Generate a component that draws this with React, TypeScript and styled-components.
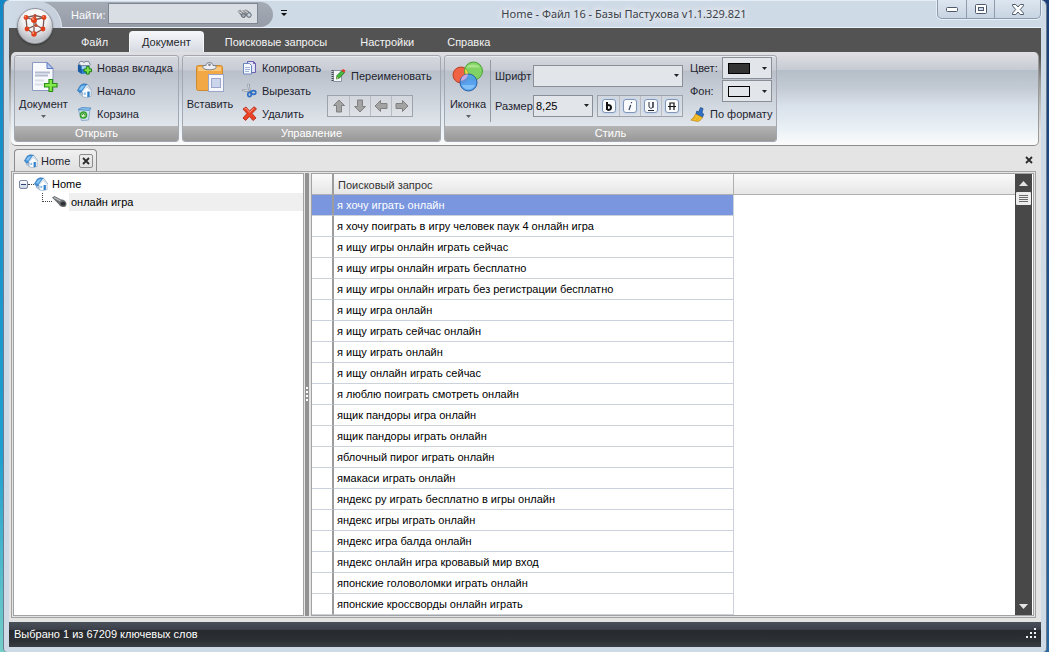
import React from "react";
import styled, { createGlobalStyle, css } from "styled-components";

const FONT = `"Liberation Sans", Arial, sans-serif`;
const CAPTION_FONT = `"Noto Sans", "Open Sans", sans-serif`;

const Global = createGlobalStyle`
  *, *::before, *::after { box-sizing: border-box; }
  html, body { margin: 0; height: 100%; overflow: hidden; }
  #root { height: 100%; }
  body, button, input, select, table { font-family: ${FONT}; font-size: 11px; line-height: 14px; color: #1e2430; }
  button { margin: 0; padding: 0; border: 0; background: none; white-space: nowrap; cursor: default; }
  svg { display: block; flex: none; }
`;

/* ---------- window frame ---------- */

const Desktop = styled.div`
  height: 100vh;
  padding: 0 2px 0 3px;
  display: flex;
  background:
    linear-gradient(#1388c6, #1f9fd0 70%, #74cfc8) left / 50% 100% no-repeat,
    linear-gradient(#1b3f76, #2a66a0) right / 50% 100% no-repeat;
`;

const Frame = styled.div`
  flex: 1;
  min-width: 0;
  display: flex;
  flex-direction: column;
  padding: 0 5px 5px;
  border: solid #6b7c90;
  border-width: 0 1px;
  border-radius: 6px 6px 4px 4px;
  background: #cfdae7;
`;

const TitleBar = styled.header`
  position: relative;
  display: flex;
  height: 28px;
  border-bottom: 1px solid #e9f1f9;
  box-shadow: inset 0 1px 0 #e6eef7;
`;

const Halo = styled.div`
  width: 53px;
  height: 27px;
  margin-top: 1px;
  border-radius: 0 26px 0 0;
  border-right: 1px solid #e3e9f1;
  background: linear-gradient(90deg, #cfdae7, #c6cfdb);
  z-index: 1;
`;

const OrbButton = styled.button`
  position: absolute;
  left: 8px;
  top: 8px;
  z-index: 2;
  width: 36px;
  height: 36px;
  display: grid;
  place-items: center;
  border-radius: 50%;
  border: 1px solid #8f949c;
  background: radial-gradient(circle at 50% 25%, #ffffff 0, #f2f2f4 40%, #b9bcc2 75%, #dadbe0 100%);
  box-shadow: 0 1px 2px #00000066;
`;

const FindBar = styled.div`
  display: flex;
  align-items: center;
  justify-content: space-between;
  width: 237px;
  height: 25px;
  margin: 2px 0 0 -26px;
  padding: 0 15px 2px 35px;
  border-radius: 0 13px 13px 0;
  background: linear-gradient(#a5abb5, #979da8);
`;

const FindLabel = styled.label`
  padding-top: 2px;
  color: #fbfcfd;
`;

const FindBox = styled.span`
  display: flex;
  align-items: center;
  width: 150px;
  height: 21px;
  padding-right: 5px;
  border: 1px solid #7f8590;
  background: #d9dde4;
`;

const FindInput = styled.input`
  flex: 1;
  min-width: 0;
  height: 19px;
  border: 0;
  outline: 0;
  background: none;
`;

const QuickMenu = styled.button`
  width: 22px;
  height: 27px;
  display: grid;
  place-items: center;
`;

const Title = styled.h1`
  flex: 1;
  margin: 0;
  padding: 6px 0 0 16px;
  text-align: center;
  font-family: ${CAPTION_FONT};
  font-size: 11px;
  line-height: 16px;
  font-weight: 400;
  color: #3c4148;
  white-space: nowrap;
  text-shadow: 0 0 6px #ffffff, 0 0 8px #ffffff;
`;

const Controls = styled.div`
  display: flex;
  height: 19px;
  border: 1px solid #8d9bad;
  border-top: 0;
  border-radius: 0 0 5px 5px;
  background: linear-gradient(#dde6f0, #c8d4e2);
  box-shadow: 0 0 0 1px #e6eef7;
`;

const Control = styled.button<{ $wide?: boolean }>`
  width: ${(p) => (p.$wide ? 46 : 28)}px;
  display: grid;
  place-items: center;
  & + & { border-left: 1px solid #8d9bad; }
`;

/* ---------- ribbon ---------- */

const TabBar = styled.nav`
  display: flex;
  align-items: flex-end;
  gap: 9px;
  height: 24px;
  padding-left: 60px;
  background: #535353;
`;

const Tab = styled.button<{ $active?: boolean }>`
  height: 21px;
  padding: 0 12px;
  color: #f4f4f4;
  ${(p) =>
    p.$active &&
    css`
      color: #26292f;
      border: 1px solid #f4f5f7;
      border-bottom: 0;
      border-radius: 4px 4px 0 0;
      background: linear-gradient(#f4f6f9, #d6dae1);
    `}
`;

const RibbonBack = styled.div`
  background: linear-gradient(#535353 4px, #9a9a9a 30px, #e4e4e4 80px);
`;

const Ribbon = styled.div`
  display: flex;
  gap: 3px;
  height: 94px;
  margin: 0 2px;
  padding: 3px 3px 4px;
  border-bottom: 1px solid #8c8c8c;
  border-right: 1px solid #9a9a9a;
  border-radius: 5px;
  background: linear-gradient(#e0e0e4, #c6cad2 18px, #b4bec8 18px, #c3cad3 36px, #d9e1ea 54px, #e9f0f5 76px, #fbfbfb);
`;

const Group = styled.section`
  display: flex;
  flex-direction: column;
  height: 87px;
  border: 1px solid #a4a7b0;
  border-radius: 3px;
  overflow: hidden;
  background: linear-gradient(#d6d8df, #c9ccd4 14px, #b9c0ca 15px, #c3cad3 30px, #e1e6ec 70px);
  box-shadow: inset 0 1px 0 #e9ebef;
`;

const GroupBody = styled.div`
  flex: 1;
  display: flex;
  padding: 0 4px;
`;

const GroupLabel = styled.h2`
  margin: 0;
  height: 15px;
  font-size: 11px;
  line-height: 15px;
  font-weight: 400;
  text-align: center;
  color: #ffffff;
  background: linear-gradient(#b4b4b4, #989898);
`;

const BigButton = styled.button<{ $width: number }>`
  width: ${(p) => p.$width}px;
  display: flex;
  flex-direction: column;
  align-items: center;
  gap: 4px;
  padding-top: 5px;
`;

const ToolColumn = styled.div<{ $width: number; $near?: boolean }>`
  display: flex;
  flex-direction: column;
  align-items: flex-start;
  width: ${(p) => p.$width}px;
  margin-left: ${(p) => (p.$near ? 4 : 9)}px;
`;

const ToolButton = styled.button<{ $tall?: boolean }>`
  display: flex;
  align-items: center;
  gap: 5px;
  height: ${(p) => (p.$tall ? 39 : 23)}px;
  padding-left: ${(p) => (p.$tall ? 4 : 0)}px;
`;

const ButtonStrip = styled.div`
  display: flex;
  height: 22px;
  border: 1px solid #9da3ad;
  background: linear-gradient(#d3d7dd, #dfe3e8);
`;

const StripButton = styled.button`
  flex: 0 0 21px;
  display: grid;
  place-items: center;
  & + & { border-left: 1px solid #b6bbc4; }
`;

const Divider = styled.div`
  width: 1px;
  height: 62px;
  margin: 4px 4px 0 3px;
  background: #9299a5;
`;

const FormRows = styled.div`
  display: grid;
  grid-template-columns: 38px 150px;
  grid-template-rows: 22px 22px;
  row-gap: 8px;
  align-content: start;
  align-items: center;
  padding-top: 9px;
`;

const SizeRow = styled.div`
  display: flex;
  justify-content: space-between;
`;

const ComboBox = styled.span<{ $width: number }>`
  position: relative;
  display: block;
  width: ${(p) => p.$width}px;
  height: 22px;
  & > svg {
    position: absolute;
    right: 4px;
    top: 9px;
    pointer-events: none;
  }
`;

const Select = styled.select`
  width: 100%;
  height: 100%;
  padding: 0 2px;
  border: 1px solid #8a8e97;
  border-radius: 0;
  appearance: none;
  background: #e2e5ea;
  color: #000000;
`;

const FormatKey = styled.span`
  display: grid;
  place-items: center;
  width: 14px;
  height: 14px;
  border: 1px solid #8296b4;
  border-radius: 3px;
  background: #f8fafc;
  box-shadow: 0 0 2px 1px #c3d6ee;
`;

const ColorGrid = styled.div`
  display: grid;
  grid-template-columns: 32px 50px;
  grid-auto-rows: 22px;
  row-gap: 1px;
  align-content: start;
  align-items: center;
  margin-left: 7px;
  padding-top: 1px;
`;

const WideCell = styled.div`
  grid-column: 1 / -1;
`;

const ColorButton = styled.button`
  display: flex;
  align-items: center;
  justify-content: space-between;
  height: 22px;
  padding: 0 4px 0 5px;
  border: 1px solid #8a8e97;
  background: #e2e5ea;
`;

const Swatch = styled.span<{ $color: string }>`
  width: 22px;
  height: 11px;
  border: 1px solid #000000;
  background: ${(p) => p.$color};
`;

/* ---------- workspace ---------- */

const Body = styled.main`
  flex: 1;
  min-height: 0;
  display: flex;
  flex-direction: column;
  padding: 0 5px 4px 2px;
  background: #e4e4e4;
`;

const DocStrip = styled.div`
  display: flex;
  align-items: center;
  justify-content: space-between;
  height: 25px;
  padding: 3px 1px 0 3px;
`;

const DocTab = styled.div`
  display: flex;
  align-items: center;
  justify-content: space-between;
  width: 83px;
  height: 22px;
  padding: 0 3px 0 9px;
  border: 1px solid #8b8b8b;
  border-bottom: 0;
  border-radius: 4px 4px 0 0;
  background: linear-gradient(#f0f0f0, #e0e0e0);
`;

const DocName = styled.button`
  display: flex;
  align-items: center;
  gap: 3px;
`;

const TabClose = styled.button`
  width: 14px;
  height: 14px;
  display: grid;
  place-items: center;
  border: 1px solid #8b8b8b;
  border-radius: 2px;
`;

const StripClose = styled.button`
  width: 12px;
  height: 14px;
  display: grid;
  place-items: center;
`;

const Workspace = styled.div`
  flex: 1;
  min-height: 0;
  display: flex;
  padding: 1px;
  border: 1px solid #a2a2a2;
`;

const TreePanel = styled.div`
  width: 291px;
  padding: 1px 0;
  border: 1px solid #a2a2a2;
  background: #ffffff;
`;

const TreeRow = styled.div<{ $indent: number }>`
  display: flex;
  align-items: center;
  height: 18px;
  padding-left: ${(p) => p.$indent}px;
  color: #000000;
`;

const Expander = styled.button`
  width: 9px;
  height: 9px;
  display: grid;
  place-items: center;
  border: 1px solid #7b87a6;
  border-radius: 2px;
  background: linear-gradient(#ffffff, #ccd3e4);
`;

const Dots = styled.span<{ $elbow?: boolean }>`
  width: ${(p) => (p.$elbow ? 10 : 6)}px;
  height: ${(p) => (p.$elbow ? 9 : 1)}px;
  align-self: ${(p) => (p.$elbow ? "flex-start" : "center")};
  border-bottom: 1px dotted #444444;
  border-left: ${(p) => (p.$elbow ? "1px dotted #444444" : "0")};
`;

const TreeLabel = styled.span<{ $fill?: boolean }>`
  flex: 1;
  height: 18px;
  line-height: 18px;
  margin-left: 2px;
  padding-left: 2px;
  background: ${(p) => (p.$fill ? "#efefef" : "none")};
`;

const Splitter = styled.div`
  width: 7px;
  display: grid;
  place-items: center;
  border: solid #e4e4e4;
  border-width: 0 2px 0 1px;
  background: #929292;
`;

const GridPanel = styled.div`
  flex: 1;
  min-width: 0;
  display: flex;
  padding: 0 1px 0 0;
  border: 1px solid #a2a2a2;
  background: #ffffff;
`;

const GridScroll = styled.div`
  flex: 1;
  min-width: 0;
  overflow: hidden;
`;

const Table = styled.table`
  width: 100%;
  table-layout: fixed;
  border-spacing: 0;
`;

const Col = styled.col<{ $width?: number }>`
  width: ${(p) => (p.$width ? `${p.$width}px` : "auto")};
`;

const HeadCell = styled.th<{ $marker?: boolean }>`
  height: 21px;
  padding: 2px 4px 0;
  text-align: left;
  font-weight: 400;
  color: #333333;
  border-bottom: 1px solid #b0b0b0;
  border-right: ${(p) => (p.$marker ? "2px solid #9d9d9d" : "1px solid #b0b0b0")};
  background: linear-gradient(#fafafa, #e6e6e6);
  &:last-child { border-right: 0; }
`;

const Row = styled.tr<{ $selected?: boolean }>`
  background: ${(p) => (p.$selected ? "#7a96df" : "#ffffff")};
  color: ${(p) => (p.$selected ? "#ffffff" : "#000000")};
`;

const Cell = styled.td<{ $marker?: boolean }>`
  height: 21px;
  padding: 0 3px;
  white-space: nowrap;
  border-bottom: 1px solid #cbd2dc;
  border-right: ${(p) => (p.$marker ? "2px solid #9d9d9d" : "1px solid #cbd2dc")};
`;

const BlankCell = styled.td`
  background: #ffffff;
`;

const ScrollTrack = styled.div`
  width: 17px;
  display: flex;
  flex-direction: column;
  align-items: center;
  padding: 1px;
  background: #484848;
`;

const ScrollArrow = styled.button`
  width: 15px;
  height: 16px;
  display: grid;
  place-items: center;
`;

const ScrollThumb = styled.div`
  width: 15px;
  height: 13px;
  display: grid;
  place-items: center;
  margin-top: 1px;
  margin-bottom: auto;
  border-radius: 1px;
  background: #ececec;
`;

const StatusBar = styled.footer`
  display: flex;
  align-items: center;
  justify-content: space-between;
  height: 25px;
  padding: 0 4px 2px 5px;
  color: #ffffff;
  background: linear-gradient(#4a505a, #3a3f49 8px, #26292d 8px, #2c2f33 18px, #3a3e44);
`;

/* ---------- drawings ---------- */

const DropArrow = ({ color = "#222222" }: { color?: string }) => (
  <svg width="5" height="3" viewBox="0 0 5 3" aria-hidden="true">
    <path d="M0 0h5L2.500 3z" fill={color} />
  </svg>
);

const OrbIcon = () => (
  <svg width="26" height="26" viewBox="0 0 26 26" aria-hidden="true">
    <g stroke="#7c5a54" strokeWidth="1.300" fill="none">
      <path d="M4 4.500L13 2.500 22 4.500 21 16 12 21 5 16zM4 4.500L12 7 22 4.500M12 7V21M13 2.500L14 12 5 16M14 12L21 16" />
    </g>
    <g fill="#e0401c">
      <circle cx="4" cy="4.500" r="2.400" />
      <circle cx="22" cy="4.500" r="2.400" />
      <circle cx="12" cy="7" r="3" />
      <circle cx="13" cy="2.500" r="1.600" fill="#b84a30" />
      <circle cx="14" cy="12.500" r="1.600" fill="#c84a2c" />
      <circle cx="5" cy="16" r="2.400" />
      <circle cx="21" cy="16" r="2.400" />
      <circle cx="12" cy="21" r="2.700" />
    </g>
    <g fill="#ff9d78">
      <circle cx="3.300" cy="3.800" r=".8" />
      <circle cx="21.300" cy="3.800" r=".8" />
      <circle cx="11" cy="6" r="1" />
      <circle cx="11.200" cy="20" r=".9" />
    </g>
  </svg>
);

const Binoculars = () => (
  <svg width="15" height="10" viewBox="0 0 15 10" aria-hidden="true">
    <path d="M.5 2L3.500.5 9 4 7.500 9 4 7zM5.500 1.500L9 .5 13 3 14.500 6 13 9 10 8z" fill="#8b8f94" />
    <path d="M1.500 2.200L5.500 4.800M3.500 1L7.500 3.800M7.500 1.500L11 4" stroke="#dcdfe3" />
    <circle cx="6.500" cy="6.500" r="2" fill="#9da5ae" stroke="#5a5e65" strokeWidth=".8" />
    <circle cx="12" cy="6" r="2.200" fill="#c5d6e2" stroke="#5a5e65" strokeWidth=".8" />
  </svg>
);

const FileIcon = () => (
  <svg width="30" height="32" viewBox="0 0 30 32" aria-hidden="true">
    <path d="M3.500 1.500H18l6 6V29.500H3.500z" fill="#f7f9fd" stroke="#8c9abf" />
    <path d="M18 1.500v6h6z" fill="#b5c9ee" stroke="#5c78c0" />
    <path d="M6 11.500h15M6 14.500h13" stroke="#b4bccf" strokeWidth="2" />
    <path d="M6 19.500h9M6 23.500h8" stroke="#dadfe9" strokeWidth="2" />
    <path d="M20 18.500h3.500v4h4.500v3.500h-4.500v4.500H20V26h-4.500v-3.500H20z" fill="#86ea4a" stroke="#2a8f18" strokeWidth="1.200" />
  </svg>
);

const NewTabIcon = () => (
  <svg width="15" height="15" viewBox="0 0 16 16" aria-hidden="true">
    <path d="M1 5l3-1 9 1v9l-8 1-4-3z" fill="#2f7fd0" />
    <path d="M1 5l4 1v9l-4-3z" fill="#1a5aa0" />
    <path d="M5 6.500h8v3H5z" fill="#a9d5f8" />
    <path d="M1.500 4.500l2-3h3l1 1.500 1-1.500h4l1.500 3.500-1 1H5z" fill="#e9edf2" stroke="#5c6b80" strokeWidth=".8" />
    <path d="M10 7h3v2.500h2.500v3H13V15h-3v-2.500H7.500v-3H10z" fill="#7fe04a" stroke="#15790f" />
  </svg>
);

const HomeIcon = ({ size = 15 }: { size?: number }) => (
  <svg width={size} height={size} viewBox="0 0 15 15" aria-hidden="true">
    <path d="M2 8l4-1v6.800L2 11.500z" fill="#a9bed4" />
    <path d="M5.500 8L10 3.500 14 8v5.500L9 14.500l-3.500-.8z" fill="#fbfdff" stroke="#8fa3ba" strokeWidth=".7" />
    <path d="M.4 7.500L3.500 2.200 6.500.8l3.800.5L5.200 8.800 2.500 9.500z" fill="#3d8fd6" stroke="#2a6cae" strokeWidth=".6" />
    <path d="M1.800 6.800L4.400 3 8 2.200 4.600 7.200z" fill="#86c3f2" />
    <path d="M10 2.200L14.600 8.200M9.800 2.500L5.300 9" stroke="#e6eef6" strokeWidth="1.200" />
    <path d="M10.500 1.500L15 7.800" stroke="#7d98b4" strokeWidth=".7" />
    <path d="M10.300 8.500h2.400v5.200l-2.400.5z" fill="#2f80cc" />
    <path d="M6.800 9.500h2v2.200h-2z" fill="#86b8e2" />
  </svg>
);

const BinIcon = () => (
  <svg width="15" height="15" viewBox="0 0 15 15" aria-hidden="true">
    <path d="M1.500 4L13 3l-1.500 11-7 .5z" fill="#cfe3f2" stroke="#7ba0c0" strokeWidth=".8" />
    <path d="M1 3.500L5 1.500l9 .5-2 2.500z" fill="#8cc0ec" stroke="#4a88c0" strokeWidth=".8" />
    <circle cx="6.500" cy="9" r="3" fill="#d8f2cc" stroke="#33a02c" strokeWidth="1.600" />
    <path d="M5 9l1.500-2L8 9M7 10.500l1-1" stroke="#1f7a1a" fill="none" />
  </svg>
);

const PasteIcon = () => (
  <svg width="30" height="32" viewBox="0 0 30 32" aria-hidden="true">
    <rect x="1.500" y="4.500" width="26" height="25" rx="2" fill="#f2a844" stroke="#cf8a30" />
    <path d="M3 6h23v4H3z" fill="#f9c67a" />
    <path d="M8 4.500h3c0-4 7-4 7 0h3v2c0 3-13 3-13 0z" fill="#eceef2" stroke="#7d828c" />
    <circle cx="14.500" cy="3.800" r="1.300" fill="#7d828c" />
    <rect x="13.500" y="13.500" width="15" height="17" fill="#f5f7fc" stroke="#9aa4c6" />
    <rect x="16.500" y="17.500" width="9" height="9" fill="#ccd5ec" stroke="#9ba7cc" />
  </svg>
);

const CopyIcon = () => (
  <svg width="15" height="15" viewBox="0 0 15 15" aria-hidden="true">
    <path d="M5.500 1.500h6l2 2v9h-8z" fill="#e4e4f8" stroke="#6a5fae" />
    <path d="M1.500 3.500h6l2 2v8.500h-8z" fill="#f5f8ff" stroke="#6a86c0" />
    <path d="M3 7.500h5M3 9.500h5M3 11.500h4" stroke="#9fb2dc" />
    <path d="M11.500 1.500v2h2" fill="none" stroke="#6a5fae" />
  </svg>
);

const CutIcon = () => (
  <svg width="15" height="15" viewBox="0 0 15 15" aria-hidden="true">
    <path d="M6.500 1L7.500 9M.5 7L9 8.500" stroke="#7b828c" strokeWidth="2.200" />
    <path d="M6.500 1.500L7.300 7.500M1 7L7 8" stroke="#f4f6f8" strokeWidth=".9" />
    <ellipse cx="7.500" cy="11.500" rx="1.700" ry="2.200" fill="none" stroke="#2f6fc4" strokeWidth="1.700" />
    <ellipse cx="11.500" cy="9.500" rx="2.300" ry="1.900" fill="none" stroke="#2f6fc4" strokeWidth="1.700" />
  </svg>
);

const DeleteIcon = () => (
  <svg width="15" height="15" viewBox="0 0 15 15" aria-hidden="true">
    <path
      d="M1 3l3-2 3.500 4L12 .8l2.500 2L10 7.500l4 4.500-3 2.500-3.500-4-4 4L1 12l4-4.500z"
      fill="#ea4428"
      stroke="#b82a16"
      strokeWidth=".9"
    />
    <path d="M2.500 3L4 2.200 7.500 6.300 12 2.200" fill="none" stroke="#ff9a80" />
  </svg>
);

const RenameIcon = () => (
  <svg width="15" height="15" viewBox="0 0 15 15" aria-hidden="true">
    <path d="M2.500 2.500h8v11h-8z" fill="#f4f6fa" stroke="#8c93a0" />
    <path d="M1.500 2v12" stroke="#444850" strokeDasharray="1 1" strokeWidth="2" />
    <path d="M5.500 11l.5-3.500 5-5 2.500 2-5 5.500z" fill="#49bb3c" stroke="#1c6e1c" strokeWidth=".8" />
    <path d="M10.500 2.800L12 1l2.500 1.500-1.300 2.200z" fill="#e03a2a" />
    <path d="M5.500 11l.6-2 1.400 1.200z" fill="#f3c98a" />
  </svg>
);

const BlockArrow = ({ turn }: { turn: number }) => (
  <svg width="14" height="14" viewBox="0 0 14 14" aria-hidden="true">
    <path
      d="M7 1l5.500 5.500H9.500V13h-5V6.500H1.500z"
      transform={`rotate(${turn} 7 7)`}
      fill="#a3a3a3"
      stroke="#808080"
    />
  </svg>
);

const CirclesIcon = () => (
  <svg width="32" height="32" viewBox="0 0 32 32" aria-hidden="true">
    <circle cx="9" cy="14" r="8" fill="#ef6244" stroke="#b84428" />
    <circle cx="21.500" cy="10" r="9" fill="#78d455" fillOpacity=".88" stroke="#4aa336" />
    <path d="M13 8a8 8 0 0 1 3 8 9 9 0 0 1-3-8z" fill="#f7d23a" />
    <circle cx="16.500" cy="21.500" r="8.500" fill="#4a9cf0" fillOpacity=".88" stroke="#2460a8" />
    <path d="M8.500 20a8.500 8.500 0 0 1 7.500-7 8 8 0 0 1-7.500 7z" fill="#d9a8e0" fillOpacity=".9" />
    <path d="M14 6.500a8 6 0 0 1 14 0z" fill="#c6f0a4" fillOpacity=".6" />
    <path d="M10 24a7 7 0 0 0 13 0z" fill="#9fd4ff" fillOpacity=".6" />
  </svg>
);

const BrushIcon = () => (
  <svg width="15" height="15" viewBox="0 0 15 15" aria-hidden="true">
    <path d="M8.500 5L10.500.6l2.600 1L12 5.500l1.800 1.700-1.500 3.300L6 7l.8-3z" fill="#2f6fc4" stroke="#1d4a8a" strokeWidth=".7" />
    <path d="M5.500 7l7 3.500c-1 2-3 3.500-5 4L.8 13c2-1.500 3.700-3.500 4.700-6z" fill="#f6c02c" stroke="#b98410" strokeWidth=".7" />
    <path d="M3 12.500l3-3M6 13.500l3-3" stroke="#c98f14" strokeWidth=".7" />
  </svg>
);

const FormatGlyph = ({ kind }: { kind: "b" | "i" | "u" | "s" }) => {
  const shapes = {
    b: <path d="M3 1v8M3 5.500c0-2 4-2 4 1s-4 3-4 1" stroke="#111111" strokeWidth="2" fill="none" />,
    i: <path d="M6.500 1v1.300M5.700 4L4 9" stroke="#33425e" strokeWidth="1.200" fill="none" />,
    u: <path d="M3 1v4c0 3 4 3 4 0V1M7 1v6M2 9.500h6" stroke="#222a3a" fill="none" />,
    s: <path d="M3 9V2h4v7M1 5.500h8" stroke="#111111" strokeWidth="1.200" fill="none" />,
  };
  return (
    <svg width="10" height="10" viewBox="0 0 10 10" aria-hidden="true">
      {shapes[kind]}
    </svg>
  );
};

const Flashlight = () => (
  <svg width="15" height="12" viewBox="0 0 15 12" aria-hidden="true">
    <path d="M0 1.500L2.500 0 9 3.500c3 0 5.500 2 5.500 4.500S13 11 11 11 7.500 10 6.500 8z" fill="#6b6f72" />
    <path d="M2 1.500L8.500 5" stroke="#c0c4c6" strokeWidth="1.200" />
    <ellipse cx="11" cy="7.800" rx="2.500" ry="2" fill="#303336" />
  </svg>
);

const Cross = () => (
  <svg width="8" height="8" viewBox="0 0 8 8" aria-hidden="true">
    <path d="M1 1l6 6M7 1L1 7" stroke="#2c2c2c" strokeWidth="1.800" />
  </svg>
);

/* ---------- data ---------- */

const TABS = ["Файл", "Документ", "Поисковые запросы", "Настройки", "Справка"];

const QUERIES = [
  "я хочу играть онлайн",
  "я хочу поиграть в игру человек паук 4 онлайн игра",
  "я ищу игры онлайн играть сейчас",
  "я ищу игры онлайн играть бесплатно",
  "я ищу игры онлайн играть без регистрации бесплатно",
  "я ищу игра онлайн",
  "я ищу играть сейчас онлайн",
  "я ищу играть онлайн",
  "я ищу онлайн играть сейчас",
  "я люблю поиграть смотреть онлайн",
  "ящик пандоры игра онлайн",
  "ящик пандоры играть онлайн",
  "яблочный пирог играть онлайн",
  "ямакаси играть онлайн",
  "яндекс ру играть бесплатно в игры онлайн",
  "яндекс игры играть онлайн",
  "яндекс игра балда онлайн",
  "яндекс онлайн игра кровавый мир вход",
  "японские головоломки играть онлайн",
  "японские кроссворды онлайн играть",
];

const MOVES = [
  { label: "Вверх", turn: 0 },
  { label: "Вниз", turn: 180 },
  { label: "Влево", turn: 270 },
  { label: "Вправо", turn: 90 },
];

const FORMATS = [
  { label: "Полужирный", kind: "b" },
  { label: "Курсив", kind: "i" },
  { label: "Подчёркнутый", kind: "u" },
  { label: "Зачёркнутый", kind: "s" },
] as const;

export default function App() {
  return (
    <>
      <Global />
      <Desktop>
        <Frame>
          <TitleBar>
            <OrbButton aria-label="Меню приложения">
              <OrbIcon />
            </OrbButton>
            <Halo />
            <FindBar>
              <FindLabel htmlFor="find">Найти:</FindLabel>
              <FindBox>
                <FindInput id="find" type="text" />
                <Binoculars />
              </FindBox>
            </FindBar>
            <QuickMenu aria-label="Панель быстрого доступа">
              <svg width="6" height="7" viewBox="0 0 6 7" aria-hidden="true">
                <path d="M0 0h6v1H0zM0 3h6L3 6z" fill="#111111" />
              </svg>
            </QuickMenu>
            <Title>Home - Файл 16 - Базы Пастухова v1.1.329.821</Title>
            <Controls>
              <Control aria-label="Свернуть">
                <svg width="12" height="5" viewBox="0 0 12 5" aria-hidden="true">
                  <rect x=".5" y=".5" width="11" height="4" rx="1" fill="#ffffff" stroke="#4e5a6c" />
                </svg>
              </Control>
              <Control aria-label="Развернуть">
                <svg width="12" height="10" viewBox="0 0 12 10" aria-hidden="true">
                  <rect x=".5" y=".5" width="11" height="9" rx="1" fill="#ffffff" stroke="#4e5a6c" />
                  <rect x="3.500" y="3.500" width="5" height="3" fill="#cfdae7" stroke="#4e5a6c" />
                </svg>
              </Control>
              <Control $wide aria-label="Закрыть">
                <svg width="12" height="11" viewBox="0 0 12 11" aria-hidden="true">
                  <path
                    d="M.5.5h3.300L6 3 8.200.5h3.300v1.300L8.300 5.500l3.200 3.700v1.300H8.200L6 8 3.800 10.500H.5V9.200l3.200-3.700L.5 1.800z"
                    fill="#ffffff"
                    stroke="#4e5a6c"
                  />
                </svg>
              </Control>
            </Controls>
          </TitleBar>

          <TabBar>
            {TABS.map((tab) => (
              <Tab key={tab} $active={tab === "Документ"}>
                {tab}
              </Tab>
            ))}
          </TabBar>

          <RibbonBack>
            <Ribbon>
              <Group>
                <GroupBody>
                  <BigButton $width={49}>
                    <FileIcon />
                    Документ
                    <DropArrow color="#5a606a" />
                  </BigButton>
                  <ToolColumn $width={97}>
                    <ToolButton>
                      <NewTabIcon />
                      Новая вкладка
                    </ToolButton>
                    <ToolButton>
                      <HomeIcon />
                      Начало
                    </ToolButton>
                    <ToolButton>
                      <BinIcon />
                      Корзина
                    </ToolButton>
                  </ToolColumn>
                </GroupBody>
                <GroupLabel>Открыть</GroupLabel>
              </Group>

              <Group>
                <GroupBody>
                  <BigButton $width={46}>
                    <PasteIcon />
                    Вставить
                  </BigButton>
                  <ToolColumn $width={81}>
                    <ToolButton>
                      <CopyIcon />
                      Копировать
                    </ToolButton>
                    <ToolButton>
                      <CutIcon />
                      Вырезать
                    </ToolButton>
                    <ToolButton>
                      <DeleteIcon />
                      Удалить
                    </ToolButton>
                  </ToolColumn>
                  <ToolColumn $width={109} $near>
                    <ToolButton $tall>
                      <RenameIcon />
                      Переименовать
                    </ToolButton>
                    <ButtonStrip>
                      {MOVES.map((move) => (
                        <StripButton key={move.label} aria-label={move.label}>
                          <BlockArrow turn={move.turn} />
                        </StripButton>
                      ))}
                    </ButtonStrip>
                  </ToolColumn>
                </GroupBody>
                <GroupLabel>Управление</GroupLabel>
              </Group>

              <Group>
                <GroupBody>
                  <BigButton $width={38}>
                    <CirclesIcon />
                    Иконка
                    <DropArrow color="#5a606a" />
                  </BigButton>
                  <Divider />
                  <FormRows>
                    <label htmlFor="font">Шрифт</label>
                    <ComboBox $width={150}>
                      <Select id="font" />
                      <DropArrow />
                    </ComboBox>
                    <label htmlFor="size">Размер</label>
                    <SizeRow>
                      <ComboBox $width={60}>
                        <Select id="size" defaultValue="8,25">
                          <option>8,25</option>
                        </Select>
                        <DropArrow />
                      </ComboBox>
                      <ButtonStrip>
                        {FORMATS.map((format) => (
                          <StripButton key={format.kind} aria-label={format.label}>
                            <FormatKey>
                              <FormatGlyph kind={format.kind} />
                            </FormatKey>
                          </StripButton>
                        ))}
                      </ButtonStrip>
                    </SizeRow>
                  </FormRows>
                  <ColorGrid>
                    <label htmlFor="color">Цвет:</label>
                    <ColorButton id="color">
                      <Swatch $color="#333333" />
                      <DropArrow />
                    </ColorButton>
                    <label htmlFor="back">Фон:</label>
                    <ColorButton id="back">
                      <Swatch $color="#e2e5ea" />
                      <DropArrow />
                    </ColorButton>
                    <WideCell>
                      <ToolButton>
                        <BrushIcon />
                        По формату
                      </ToolButton>
                    </WideCell>
                  </ColorGrid>
                </GroupBody>
                <GroupLabel>Стиль</GroupLabel>
              </Group>
            </Ribbon>
          </RibbonBack>

          <Body>
            <DocStrip>
              <DocTab>
                <DocName>
                  <HomeIcon size={14} />
                  Home
                </DocName>
                <TabClose aria-label="Закрыть вкладку">
                  <Cross />
                </TabClose>
              </DocTab>
              <StripClose aria-label="Закрыть документ">
                <Cross />
              </StripClose>
            </DocStrip>
            <Workspace>
              <TreePanel>
                <TreeRow $indent={5}>
                  <Expander aria-label="Свернуть ветку">
                    <svg width="5" height="1" viewBox="0 0 5 1" aria-hidden="true">
                      <path d="M0 0h5v1H0z" fill="#2f3f78" />
                    </svg>
                  </Expander>
                  <Dots />
                  <HomeIcon size={14} />
                  <TreeLabel>Home</TreeLabel>
                </TreeRow>
                <TreeRow $indent={28}>
                  <Dots $elbow />
                  <Flashlight />
                  <TreeLabel $fill>онлайн игра</TreeLabel>
                </TreeRow>
              </TreePanel>
              <Splitter>
                <svg width="2" height="15" viewBox="0 0 2 15" aria-hidden="true">
                  <path d="M1 0v15" stroke="#ffffff" strokeWidth="2" strokeDasharray="2 2" />
                </svg>
              </Splitter>
              <GridPanel>
                <GridScroll>
                  <Table>
                    <colgroup>
                      <Col $width={22} />
                      <Col $width={400} />
                      <Col />
                    </colgroup>
                    <thead>
                      <tr>
                        <HeadCell $marker aria-label="Отметка" />
                        <HeadCell>Поисковый запрос</HeadCell>
                        <HeadCell aria-hidden="true" />
                      </tr>
                    </thead>
                    <tbody>
                      {QUERIES.map((query, index) => (
                        <Row key={query} $selected={index === 0}>
                          <Cell $marker />
                          <Cell>{query}</Cell>
                          <BlankCell />
                        </Row>
                      ))}
                    </tbody>
                  </Table>
                </GridScroll>
                <ScrollTrack>
                  <ScrollArrow aria-label="Прокрутить вверх">
                    <svg width="9" height="5" viewBox="0 0 9 5" aria-hidden="true">
                      <path d="M0 5h9L4.500 0z" fill="#e4e4e4" />
                    </svg>
                  </ScrollArrow>
                  <ScrollThumb>
                    <svg width="9" height="7" viewBox="0 0 9 7" aria-hidden="true">
                      <path d="M0 .5h9M0 2.500h9M0 4.500h9M0 6.500h9" stroke="#6a6a6a" />
                    </svg>
                  </ScrollThumb>
                  <ScrollArrow aria-label="Прокрутить вниз">
                    <svg width="9" height="5" viewBox="0 0 9 5" aria-hidden="true">
                      <path d="M0 0h9L4.500 5z" fill="#e4e4e4" />
                    </svg>
                  </ScrollArrow>
                </ScrollTrack>
              </GridPanel>
            </Workspace>
          </Body>

          <StatusBar>
            <span>Выбрано 1 из 67209 ключевых слов</span>
            <svg width="11" height="11" viewBox="0 0 11 11" aria-hidden="true">
              <path
                d="M8 0h2v2H8zM4 4h2v2H4zM8 4h2v2H8zM0 8h2v2H0zM4 8h2v2H4zM8 8h2v2H8z"
                fill="#f0f0f0"
              />
            </svg>
          </StatusBar>
        </Frame>
      </Desktop>
    </>
  );
}
